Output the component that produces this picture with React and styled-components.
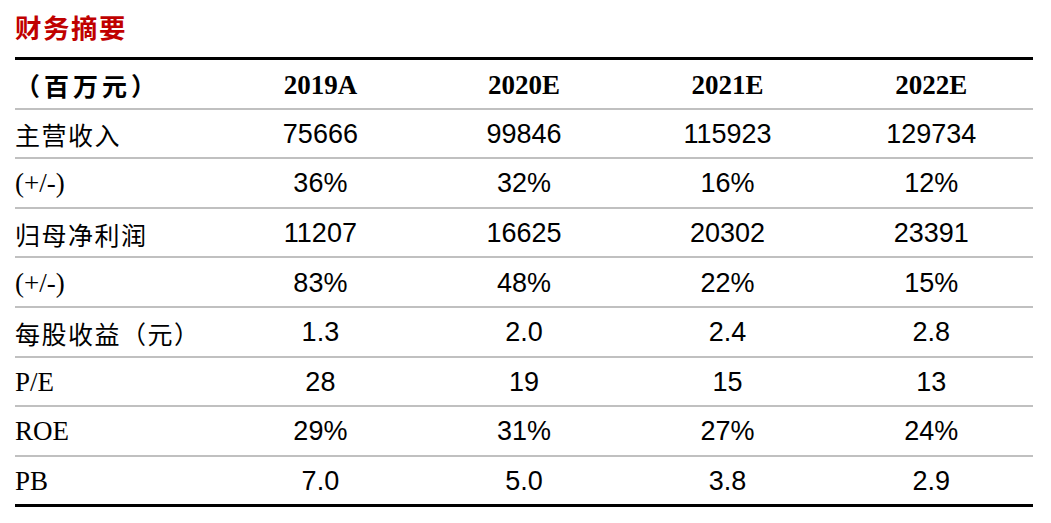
import React from "react";
import styled, { createGlobalStyle } from "styled-components";

const Global = createGlobalStyle`
  html, body { margin: 0; padding: 0; background: #fff; }
  body { width: 1051px; height: 523px; overflow: hidden; }
`;

const Page = styled.div`
  padding: 0 18px 0 15px;
`;

const Title = styled.h1`
  margin: 0;
  height: 57px;
  display: flex;
  align-items: center;
  padding-bottom: 5px;
  box-sizing: border-box;
  font-family: "Noto Sans CJK SC", sans-serif;
  font-weight: 700;
  font-size: 26.5px;
  letter-spacing: 1.5px;
  color: #c00000;
`;

const Table = styled.div`
  border-top: 3px solid #000;
  border-bottom: 3px solid #000;
`;

const Row = styled.div`
  display: grid;
  grid-template-columns: repeat(5, 1fr);
  align-items: center;
  height: 47.6px;
  border-bottom: 2px solid #c0c0c0;
  &:last-child { border-bottom: none; }
`;

const Label = styled.div`
  font-family: ${(p) =>
    p.$cjk ? '"Noto Sans CJK SC", sans-serif' : '"Liberation Serif", serif'};
  font-size: ${(p) => (p.$cjk ? "25px" : "27px")};
  font-weight: ${(p) => (p.$bold ? 700 : 400)};
  letter-spacing: ${(p) => (p.$wide ? "4px" : p.$cjk ? "1.5px" : "0")};
  color: #000;
  padding-top: 2px;
  white-space: nowrap;
`;

const Head = styled.div`
  text-align: center;
  font-family: "Liberation Serif", serif;
  font-weight: 700;
  font-size: 27px;
  color: #000;
  padding-top: 4px;
`;

const Cell = styled.div`
  text-align: center;
  font-family: "Liberation Sans", Arial, sans-serif;
  font-size: 27px;
  color: #000;
  padding-top: 2px;
`;

const rows = [
  { label: "主营收入", cjk: true, v: ["75666", "99846", "115923", "129734"] },
  { label: "(+/-)", v: ["36%", "32%", "16%", "12%"] },
  { label: "归母净利润", cjk: true, v: ["11207", "16625", "20302", "23391"] },
  { label: "(+/-)", v: ["83%", "48%", "22%", "15%"] },
  { label: "每股收益（元）", cjk: true, v: ["1.3", "2.0", "2.4", "2.8"] },
  { label: "P/E", v: ["28", "19", "15", "13"] },
  { label: "ROE", v: ["29%", "31%", "27%", "24%"] },
  { label: "PB", v: ["7.0", "5.0", "3.8", "2.9"] },
];

export default function App() {
  return (
    <Page>
      <Global />
      <Title>财务摘要</Title>
      <Table>
        <Row>
          <Label $cjk $bold $wide>（百万元）</Label>
          {["2019A", "2020E", "2021E", "2022E"].map((h) => (
            <Head key={h}>{h}</Head>
          ))}
        </Row>
        {rows.map((r, i) => (
          <Row key={i}>
            <Label $cjk={r.cjk}>{r.label}</Label>
            {r.v.map((x, j) => (
              <Cell key={j}>{x}</Cell>
            ))}
          </Row>
        ))}
      </Table>
    </Page>
  );
}
